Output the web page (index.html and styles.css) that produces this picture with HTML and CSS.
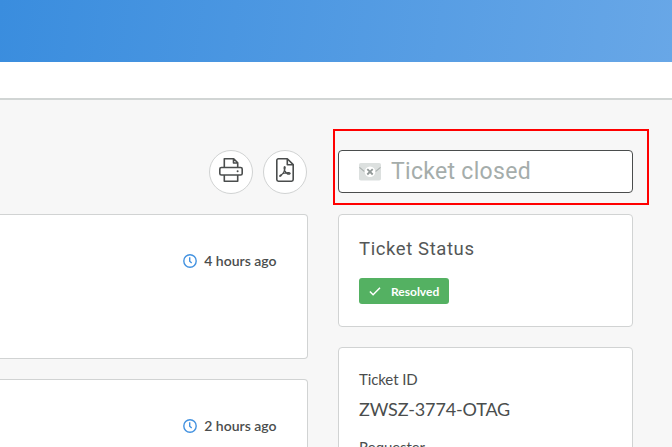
FILE: index.html
```html
<!DOCTYPE html>
<html lang="en">
<head>
<meta charset="utf-8">
<title>Ticket</title>
<link rel="stylesheet" href="styles.css">
</head>
<body>
<header class="banner"></header>
<nav class="subnav"></nav>
<main class="layout">
  <section class="thread">
    <div class="actions">
      <button class="round" aria-label="Print">
        <svg width="24" height="24" viewBox="0 0 24 24" fill="none" stroke="#4a4d4d" stroke-width="1.6" stroke-linejoin="round"><path d="M5.3 9.5V.8h9.4l4 4v4.700M14.500 1v4h4"/><rect x=".8" y="9.500" width="22.400" height="7.500" rx="1.600"/><path d="M5.300 17v6.200h13.400V17"/><circle cx="18.600" cy="13.200" r="1" fill="#4a4d4d" stroke="none"/></svg>
      </button>
      <button class="round" aria-label="Save as PDF">
        <svg width="18" height="24" viewBox="0 0 18 24" fill="none" stroke="#4a4d4d" stroke-width="1.6" stroke-linejoin="round"><path d="M2.400.8h8.900l5.900 5.800v15a1.600 1.600 0 0 1-1.600 1.600H2.400a1.600 1.600 0 0 1-1.600-1.600V2.400A1.600 1.600 0 0 1 2.400.8zM11.300 1v5.700H17"/><path stroke-width="1.200" stroke-linecap="round" d="M8.700 8.600c-1.100.2-.6 2.600.3 4.500.9 1.700 2.900 3.200 4.500 3 1.200-.3.700-1.400-.9-1.500-2.500-.1-6.500 1.100-8.300 2.500-1.200 1-.3 1.700.6.700C6.800 15.900 9 11.500 9.200 9.500c0-.6-.1-.9-.5-.9z"/></svg>
      </button>
    </div>
    <article class="card post">
      <svg class="clock" width="14" height="14" viewBox="0 0 14 14" fill="none" stroke="#4392e0" stroke-width="1.4"><circle cx="7" cy="7" r="6.2"/><path d="M6.700 3.300v4l2 1.700"/></svg>
      <time>4 hours ago</time>
    </article>
    <article class="card post">
      <svg class="clock" width="14" height="14" viewBox="0 0 14 14" fill="none" stroke="#4392e0" stroke-width="1.4"><circle cx="7" cy="7" r="6.2"/><path d="M6.700 3.300v4l2 1.700"/></svg>
      <time>2 hours ago</time>
    </article>
  </section>
  <aside class="side">
    <div class="highlight">
      <div class="closed">
        <svg width="22" height="18" viewBox="0 0 22 18"><rect width="22" height="17.500" rx="1.800" fill="#dce0df"/><path d="M.5 4.300l5 4.300M21.500 4.300l-5 4.300" stroke="#a9afae" stroke-width="1.100"/><circle cx="11" cy="8.800" r="5.300" fill="#fff"/><path d="M8.300 6.100l5.400 5.400M13.700 6.100l-5.400 5.400" stroke="#929998" stroke-width="1.800"/></svg>
        <span>Ticket closed</span>
      </div>
    </div>
    <section class="card status">
      <h2>Ticket Status</h2>
      <span class="badge"><svg width="12" height="9" viewBox="0 0 12 9" fill="none" stroke="#fff" stroke-width="1.500"><path d="M.9 4.500l3.200 3.200L11 .8"/></svg>Resolved</span>
    </section>
    <section class="card details">
      <dl>
        <dt>Ticket ID</dt>
        <dd>ZWSZ-3774-OTAG</dd>
        <dt>Requester</dt>
      </dl>
    </section>
  </aside>
</main>
</body>
</html>
```
FILE: styles.css
```css
* { box-sizing: border-box; }
body {
  margin: 0;
  height: 447px;
  overflow: hidden;
  background: #f7f7f7;
  color: #4a4d4d;
  font-family: Lato, sans-serif;
}
.banner {
  height: 62px;
  background: linear-gradient(98deg, #3a8dde, #68a7e7);
}
.subnav {
  height: 38px;
  background: #fff;
  border-bottom: 2px solid #d1d5d4;
}
.layout {
  display: grid;
  grid-template-columns: 308px 295px;
  column-gap: 30px;
  height: 347px;
  padding-top: 50px;
}
.actions {
  display: flex;
  justify-content: flex-end;
  gap: 10px;
  padding-right: 1px;
  margin-bottom: 20px;
}
.round {
  display: flex;
  align-items: center;
  justify-content: center;
  width: 44px;
  height: 44px;
  padding: 0 0 4px;
  border: 1px solid #d1d3d3;
  border-radius: 50%;
  background: #fff;
}
.card {
  background: #fff;
  border: 1px solid #d1d3d3;
  border-radius: 4px;
}
.post {
  display: flex;
  align-items: flex-start;
  justify-content: flex-end;
  gap: 7px;
  height: 145px;
  margin-bottom: 20px;
  padding: 37px 30.5px 0 0;
  border-left: 0;
  border-radius: 0 4px 4px 0;
  font-size: 14px;
  line-height: 18px;
  font-weight: 600;
}
.clock { margin-top: 2px; }
.highlight {
  margin: -21px -16px 9px -5px;
  height: 76px;
  padding: 19px 14px 0 3px;
  border: 2px solid #f00;
}
.closed {
  display: flex;
  align-items: center;
  gap: 10px;
  height: 43px;
  padding-left: 20px;
  border: 1px solid #4a4d4d;
  border-radius: 4px;
  background: #fff;
  color: #a5adab;
  font: 23px/42px Roboto, sans-serif;
  letter-spacing: .3px;
}
.status {
  height: 113px;
  padding: 22px 20px;
  margin-bottom: 20px;
}
h2 {
  margin: 0 0 17px;
  color: #545757;
  font: 400 18.500px/24px Roboto, sans-serif;
  letter-spacing: .6px;
}
.badge {
  display: flex;
  align-items: center;
  gap: 10px;
  width: 90px;
  height: 26px;
  padding-left: 10px;
  border-radius: 3px;
  background: #54b162;
  color: #fff;
  font-size: 12px;
  font-weight: 700;
}
.details {
  height: 150px;
  padding: 21px 20px;
}
dl { margin: 0; }
dt {
  font-size: 15px;
  line-height: 20px;
  letter-spacing: -.1px;
}
dd {
  margin: 7px 0 15px;
  font-size: 18px;
  line-height: 26px;
  letter-spacing: -.15px;
}
```
